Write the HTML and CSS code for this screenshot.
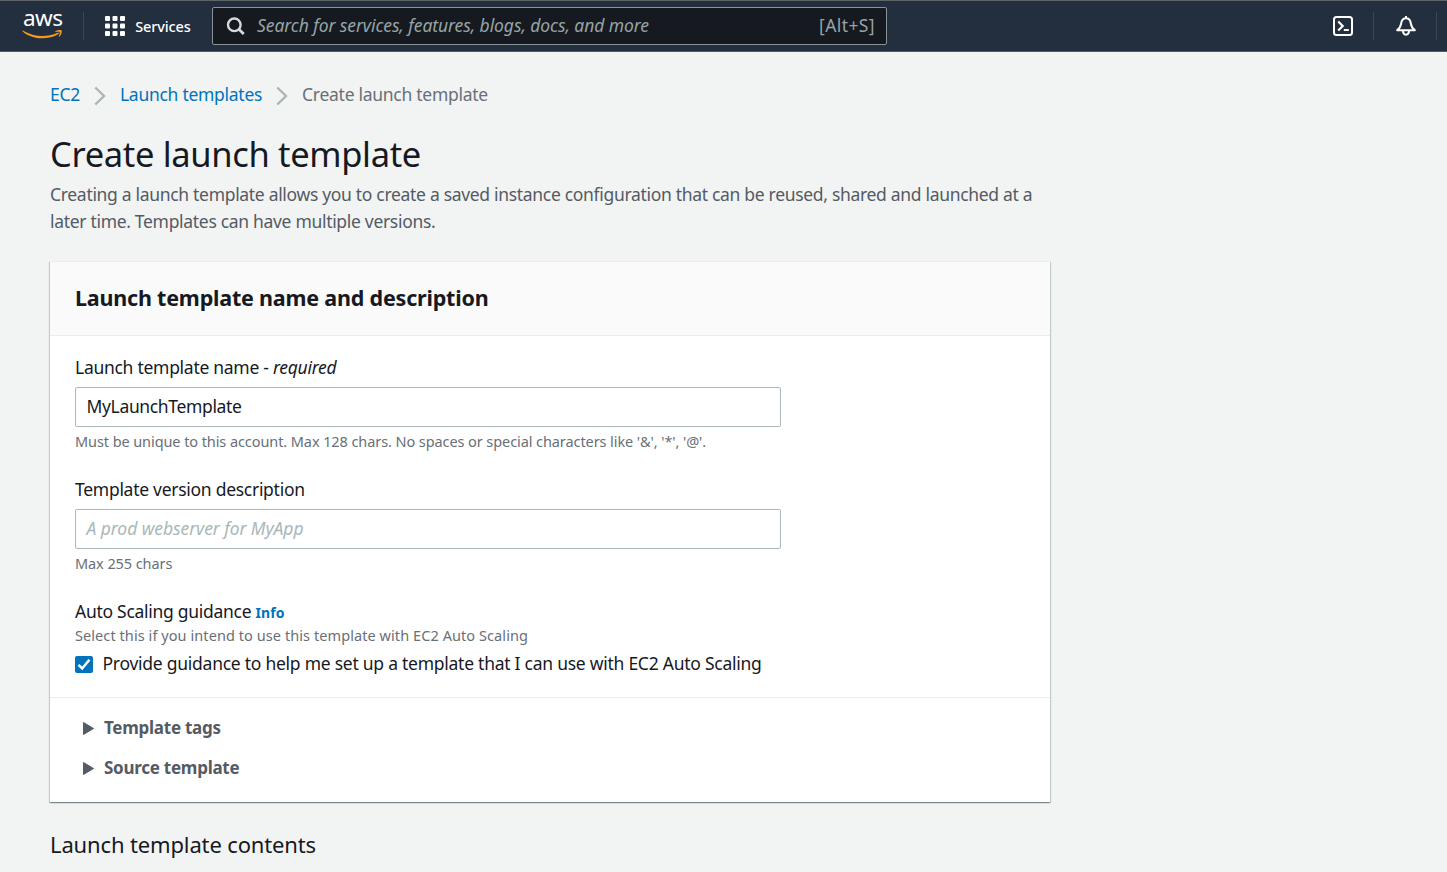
FILE: index.html
```html
<!DOCTYPE html>
<html lang="en">
<head>
<meta charset="utf-8">
<title>Create launch template</title>
<link rel="stylesheet" href="styles.css">
</head>
<body>
<header class="topbar">
  <a class="logo" aria-label="AWS">
    <span class="logo-text">aws</span>
    <svg class="logo-smile" width="41" height="10" viewBox="0 0 41 10"><path d="M.5 1.2C.2.8.6.3 1.2.7c11 6.300 23 6.800 34.500 2 .9-.4 1.600.5.700 1.200C26.500 10.200 9.500 10 .5 1.200z" fill="#f7981d"/><path d="M33.300 1.200c2-1.300 5.600-1.500 6.300-.8.700.8-.2 4.500-2.200 6.300-.4.300-.8.100-.6-.4.500-1.300 1.300-3.600.9-4.100-.4-.6-2.800-.3-4-.2-.5 0-.7-.5-.4-.8z" fill="#f7981d"/></svg>
  </a>
  <span class="bar-divider"></span>
  <button class="services">
    <svg width="20" height="20" viewBox="0 0 20 20" fill="#fff"><rect width="5" height="5" rx="1"/><rect x="7.500" width="5" height="5" rx="1"/><rect x="15" width="5" height="5" rx="1"/><rect y="7.500" width="5" height="5" rx="1"/><rect x="7.500" y="7.500" width="5" height="5" rx="1"/><rect x="15" y="7.500" width="5" height="5" rx="1"/><rect y="15" width="5" height="5" rx="1"/><rect x="7.500" y="15" width="5" height="5" rx="1"/><rect x="15" y="15" width="5" height="5" rx="1"/></svg>
    <span class="services-text">Services</span>
  </button>
  <div class="search">
    <svg width="20" height="20" viewBox="0 0 20 20" fill="none" stroke="#d5dbdb" stroke-width="2.400"><circle cx="8.300" cy="8.800" r="6.300"/><path d="M12.800 13.300l5 4.800" stroke-width="2.800"/></svg>
    <span class="search-hint">Search for services, features, blogs, docs, and more</span>
    <span class="search-key">[Alt+S]</span>
  </div>
  <div class="tools">
    <svg width="20" height="20" viewBox="0 0 20 20" fill="none" stroke="#fff" stroke-width="2"><rect x="1" y="1" width="18" height="18" rx="2.500"/><path d="M5.200 5.500L9.700 10l-4.500 4.500M10.800 14h5" stroke-width="2.200"/></svg>
    <span class="bar-divider"></span>
    <svg width="20" height="20" viewBox="0 0 20 20" fill="none" stroke="#fff" stroke-width="2" stroke-linejoin="round"><path d="M10 0v2M1.200 14.200h17.600C15.500 12 15.300 10 14.800 7.200 14.300 4 12.600 2.200 10 2.200S5.700 4 5.200 7.200C4.700 10 4.500 12 1.200 14.200z"/><path d="M7 14.500c0 5.500 6 5.500 6 0"/></svg>
    <span class="bar-divider"></span>
  </div>
</header>
<main class="page">
  <nav class="crumbs">
    <a class="link">EC2</a>
    <svg class="chev" width="12" height="20" viewBox="0 0 12 20"><path d="M1.300 1.500L10 10l-8.700 8.500" fill="none" stroke="#aab7b8" stroke-width="2.400"/></svg>
    <a class="link">Launch templates</a>
    <svg class="chev" width="12" height="20" viewBox="0 0 12 20"><path d="M1.300 1.500L10 10l-8.700 8.500" fill="none" stroke="#aab7b8" stroke-width="2.400"/></svg>
    <span class="current">Create launch template</span>
  </nav>
  <h1 class="title">Create launch template</h1>
  <p class="lead">Creating a launch template allows you to create a saved instance configuration that can be reused, shared and launched at a<br>later time. Templates can have multiple versions.</p>
  <section class="card">
    <h2 class="card-title">Launch template name and description</h2>
    <div class="card-body">
      <div class="field">
        <label class="label">Launch template name - <em>required</em></label>
        <div class="input">MyLaunchTemplate</div>
        <p class="hint">Must be unique to this account. Max 128 chars. No spaces or special characters like '&amp;', '*', '@'.</p>
      </div>
      <div class="field">
        <label class="label">Template version description</label>
        <div class="input placeholder">A prod webserver for MyApp</div>
        <p class="hint">Max 255 chars</p>
      </div>
      <div class="guidance">
        <div class="label">Auto Scaling guidance <a class="info">Info</a></div>
        <p class="hint tight">Select this if you intend to use this template with EC2 Auto Scaling</p>
        <div class="check-row">
          <svg class="checkbox" width="18" height="17" viewBox="0 0 18 17"><rect width="18" height="17" rx="2" fill="#0073bb"/><path d="M3.500 8.800l3.700 3.700 7.200-8.700" fill="none" stroke="#fff" stroke-width="2.500"/></svg>
          <span class="check-text">Provide guidance to help me set up a template that I can use with EC2 Auto Scaling</span>
        </div>
      </div>
    </div>
    <div class="expanders">
      <div class="expander"><svg class="caret" width="11" height="13" viewBox="0 0 11 13"><path d="M.5.5v12l10-6z" fill="#545b64" stroke="#545b64" stroke-linejoin="round"/></svg>Template tags</div>
      <div class="expander"><svg class="caret" width="11" height="13" viewBox="0 0 11 13"><path d="M.5.5v12l10-6z" fill="#545b64" stroke="#545b64" stroke-linejoin="round"/></svg>Source template</div>
    </div>
  </section>
  <h2 class="contents">Launch template contents</h2>
</main>
</body>
</html>
```
FILE: styles.css
```css
* { box-sizing: border-box; }
body { margin: 0; height: 872px; overflow: hidden; background: #f2f3f3; color: #16191f; font: 17.5px/27px "Noto Sans", "Open Sans", sans-serif; letter-spacing: -.28px; white-space: nowrap; }
h1, h2, p { margin: 0; font-weight: 400; }

/* Navigation bar */
.topbar { display: flex; align-items: center; height: 52px; padding-left: 22px; background: #232f3e; border-top: 1px solid #5f6466; border-bottom: 1px solid #545b64; }
.logo { display: flex; flex-direction: column; width: 41px; height: 28px; padding-left: 1px; }
.logo-text { color: #fff; font-size: 22.5px; line-height: 18px; height: 18px; font-weight: 400; margin-top: -3px; letter-spacing: -.5px; }
.logo-smile { margin: 3px 0 0 -1px; flex: none; }
.bar-divider { width: 1px; height: 28px; background: #3d4651; }
.logo + .bar-divider { margin-left: 20px; }
.services { display: flex; align-items: center; gap: 10px; margin-left: 21px; padding: 0; border: 0; background: none; color: #fff; font: 500 14.5px/20px "Noto Sans", sans-serif; letter-spacing: -.12px; }
.services-text { width: 56px; }
.search { display: flex; align-items: center; width: 675px; height: 38px; margin-left: 21px; padding: 0 11px 0 13px; border: 1px solid #879596; border-radius: 2px; background: #16191f; color: #95a5a6; }
.search-hint { margin-left: 11px; padding-bottom: 2px; font-style: italic; letter-spacing: -.077px; }
.search-key { margin-left: auto; padding-bottom: 2px; letter-spacing: .4px; }
.tools { display: flex; align-items: center; margin-left: auto; gap: 20px; padding-right: 10px; }
.tools svg:nth-of-type(2) { margin-left: 2px; }

/* Page heading */
.page { width: 1050px; padding: 29px 0 0 50px; }
.crumbs { display: flex; align-items: center; height: 27px; }
.link, .info { color: #0073bb; }
.chev { margin: 2px 14px 0 14px; }
.current { color: #687078; }
.title { margin-top: 24px; font-size: 34.5px; line-height: 44px; letter-spacing: -.34px; }
.lead { margin-top: 5px; color: #545b64; letter-spacing: -.312px; }

/* Details card */
.card { margin-top: 26px; height: 541px; background: #fff; border-top: 1px solid #eaeded; box-shadow: 0 1px 1px 0 rgba(0, 28, 36, .3), 1px 1px 1px 0 rgba(0, 28, 36, .15), -1px 1px 1px 0 rgba(0, 28, 36, .15); }
.card-title { height: 74px; padding: 22px 25px; background: #fafafa; border-bottom: 1px solid #eaeded; font-size: 21.5px; line-height: 28px; font-weight: 700; letter-spacing: -.2px; }
.card-body { height: 362px; padding: 18px 25px 0; border-bottom: 1px solid #eaeded; }
.label { display: block; line-height: 27px; }
.input { width: 706px; height: 40px; margin-top: 6px; padding: 4px 10.5px; border: 1px solid #aab7b8; border-radius: 2px; line-height: 28px; letter-spacing: -.35px; }
.placeholder { color: #aab7b8; font-style: italic; letter-spacing: -.069px; }
.hint { margin-top: 4px; color: #687078; font-size: 14.5px; line-height: 20px; letter-spacing: -.085px; }
.field { height: 122px; }
.tight { margin-top: -1px; letter-spacing: .075px; }
.info { font-size: 14px; font-weight: 700; letter-spacing: .07px; }
.check-row { display: flex; align-items: center; gap: 9.5px; height: 27px; margin-top: 5px; }
.checkbox { margin-top: 1px; }
.check-text { letter-spacing: -.256px; }
.expanders { padding: 16px 33px; }
.expander { display: flex; align-items: center; gap: 10px; height: 27px; margin-bottom: 13px; color: #545b64; font-weight: 700; font-size: 17px; letter-spacing: -.26px; }
.caret { margin-top: 2px; }
.contents { margin-top: 28px; font-size: 22px; line-height: 28px; letter-spacing: -.14px; }
```
